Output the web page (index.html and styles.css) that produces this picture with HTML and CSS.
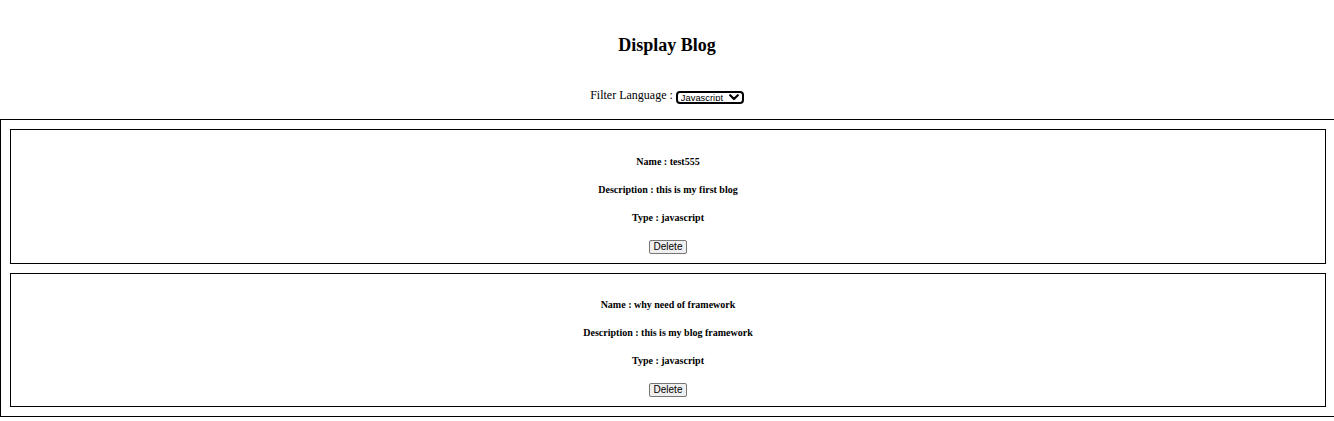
FILE: index.html
```html
<!DOCTYPE html>
<html>
<head>
<meta charset="utf-8">
<title>Display Blog</title>
<link rel="stylesheet" href="styles.css">
</head>
<body>
<h3 class="title">Display Blog</h3>
<div class="filter">
  <label class="filter-label" for="lang">Filter Language : </label>
  <span class="select-wrap">
    <select class="filter-select" id="lang">
      <option>Javascript</option>
      <option>Python</option>
    </select>
    <svg class="select-chevron" width="10" height="7" viewBox="0 0 10 7" aria-hidden="true">
      <path d="M1.2 1.2 L5 5 L8.8 1.2" fill="none" stroke="#000" stroke-width="2.2" stroke-linecap="round" stroke-linejoin="round"/>
    </svg>
  </span>
</div>
<div class="blog-list">
  <div class="blog-card">
    <h5 class="blog-field">Name : test555</h5>
    <h5 class="blog-field">Description : this is my first blog</h5>
    <h5 class="blog-field">Type : javascript</h5>
    <button class="delete-btn">Delete</button>
  </div>
  <div class="blog-card">
    <h5 class="blog-field">Name : why need of framework</h5>
    <h5 class="blog-field">Description : this is my blog framework</h5>
    <h5 class="blog-field">Type : javascript</h5>
    <button class="delete-btn">Delete</button>
  </div>
</div>
</body>
</html>
```
FILE: styles.css
```css
html, body {
  overflow-x: hidden;
}
body {
  margin: 0;
  font-family: "Liberation Serif", "Times New Roman", serif;
  color: #000;
  background: #fff;
}
.title {
  margin: 35px 0 0;
  font-size: 18px;
  font-weight: bold;
  line-height: 21px;
  text-align: center;
}
.filter {
  margin-top: 32px;
  text-align: center;
  font-size: 12px;
  height: 14px;
  line-height: 14px;
}
.select-wrap {
  position: relative;
  display: inline-block;
  vertical-align: -2px;
  height: 13px;
}
.filter-select {
  -webkit-appearance: none;
  appearance: none;
  display: block;
  box-sizing: border-box;
  width: 68px;
  height: 13px;
  margin: 0;
  padding: 0 0 1px 3px;
  font-family: "Liberation Sans", Arial, sans-serif;
  font-size: 9.4px;
  line-height: 9px;
  border: 2px solid #000;
  border-radius: 4px;
  background: #fff;
  color: #000;
}
.select-chevron {
  position: absolute;
  right: 5px;
  top: 3px;
  pointer-events: none;
}
.blog-list {
  margin-top: 17px;
  width: 100%;
  border: 1px solid #000;
}
.blog-card {
  margin: 9px;
  padding: 9px;
  border: 1px solid #000;
  text-align: center;
}
.blog-field {
  margin: 16.5px 0;
  font-size: 10px;
  font-weight: bold;
  line-height: 11.5px;
}
.delete-btn {
  display: block;
  margin: 0 auto;
  height: 14px;
  padding: 0 4px;
  font-family: "Liberation Sans", Arial, sans-serif;
  font-size: 10px;
  line-height: 12px;
  color: #000;
  background: #efefef;
  border: 1px solid #767676;
  border-radius: 2px;
}
```
